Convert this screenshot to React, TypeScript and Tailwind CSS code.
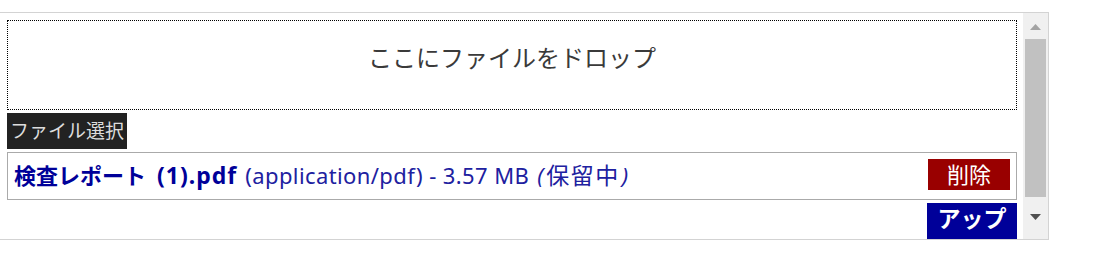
export default function App() {
  const font = { fontFamily: '"Noto Sans", "Noto Sans CJK JP", sans-serif' };

  return (
    <div className="bg-white w-[1104px] h-[260px] pt-[12px]" style={font}>
      <div className="flex h-[228px] w-[1049px] border-y border-r border-[#d3d3d3]">
        <div className="flex-1 overflow-hidden pl-[7px] pr-[6px] pt-[7px]">
          <div className="flex h-[90px] justify-center border border-dotted border-black pt-[19px] text-[24px] leading-[36px] text-[#3a3a3a]">
            ここにファイルをドロップ
          </div>

          <button
            type="button"
            className="mt-[3px] block h-[36px] bg-[#222] px-[3px] text-[19px] leading-[36px] text-[#ddd]"
          >
            ファイル選択
          </button>

          <div className="mt-[3px] flex h-[48px] items-start justify-between border border-[#aaa] pl-[6px] pr-[6px] pt-[6px]">
            <div className="flex items-baseline whitespace-nowrap text-[22px] leading-[32px] text-[#000099]">
              <span className="font-bold">検査レポート</span>
              <span className="ml-[11px] text-[23px] font-bold tracking-[1px]">(1).pdf</span>
              <span className="ml-[8px] tracking-[0.4px] text-[#2020a0]">
                (application/pdf) - 3.57 MB{" "}
                <i className="mx-[2px]">(</i>
                <span className="text-[23px] tracking-[1.5px]">保留中</span>
                <i className="ml-[2px]">)</i>
              </span>
            </div>
            <button
              type="button"
              className="h-[31px] bg-[#990000] px-[19px] text-[22px] leading-[31px] text-white"
            >
              削除
            </button>
          </div>

          <div className="mt-[3px] flex justify-end">
            <button
              type="button"
              className="w-[90px] bg-[#000099] px-[8px] text-[23px] font-bold leading-[31px] text-white"
            >
              アップロード
            </button>
          </div>
        </div>

        <div className="flex w-[25px] flex-col items-center bg-[#f0f0f0]">
          <div className="flex h-[26px] w-full items-center justify-center pt-[1px]">
            <svg width="11" height="6" viewBox="0 0 11 6">
              <polygon points="5.5,0 11,6 0,6" fill="#a3a3a3" />
            </svg>
          </div>
          <div className="h-[158px] w-[21px] bg-[#c1c1c1]" />
          <div className="flex flex-1 w-full items-center justify-center pb-[2px]">
            <svg width="11" height="6" viewBox="0 0 11 6">
              <polygon points="0,0 11,0 5.5,6" fill="#505050" />
            </svg>
          </div>
        </div>
      </div>
    </div>
  );
}
